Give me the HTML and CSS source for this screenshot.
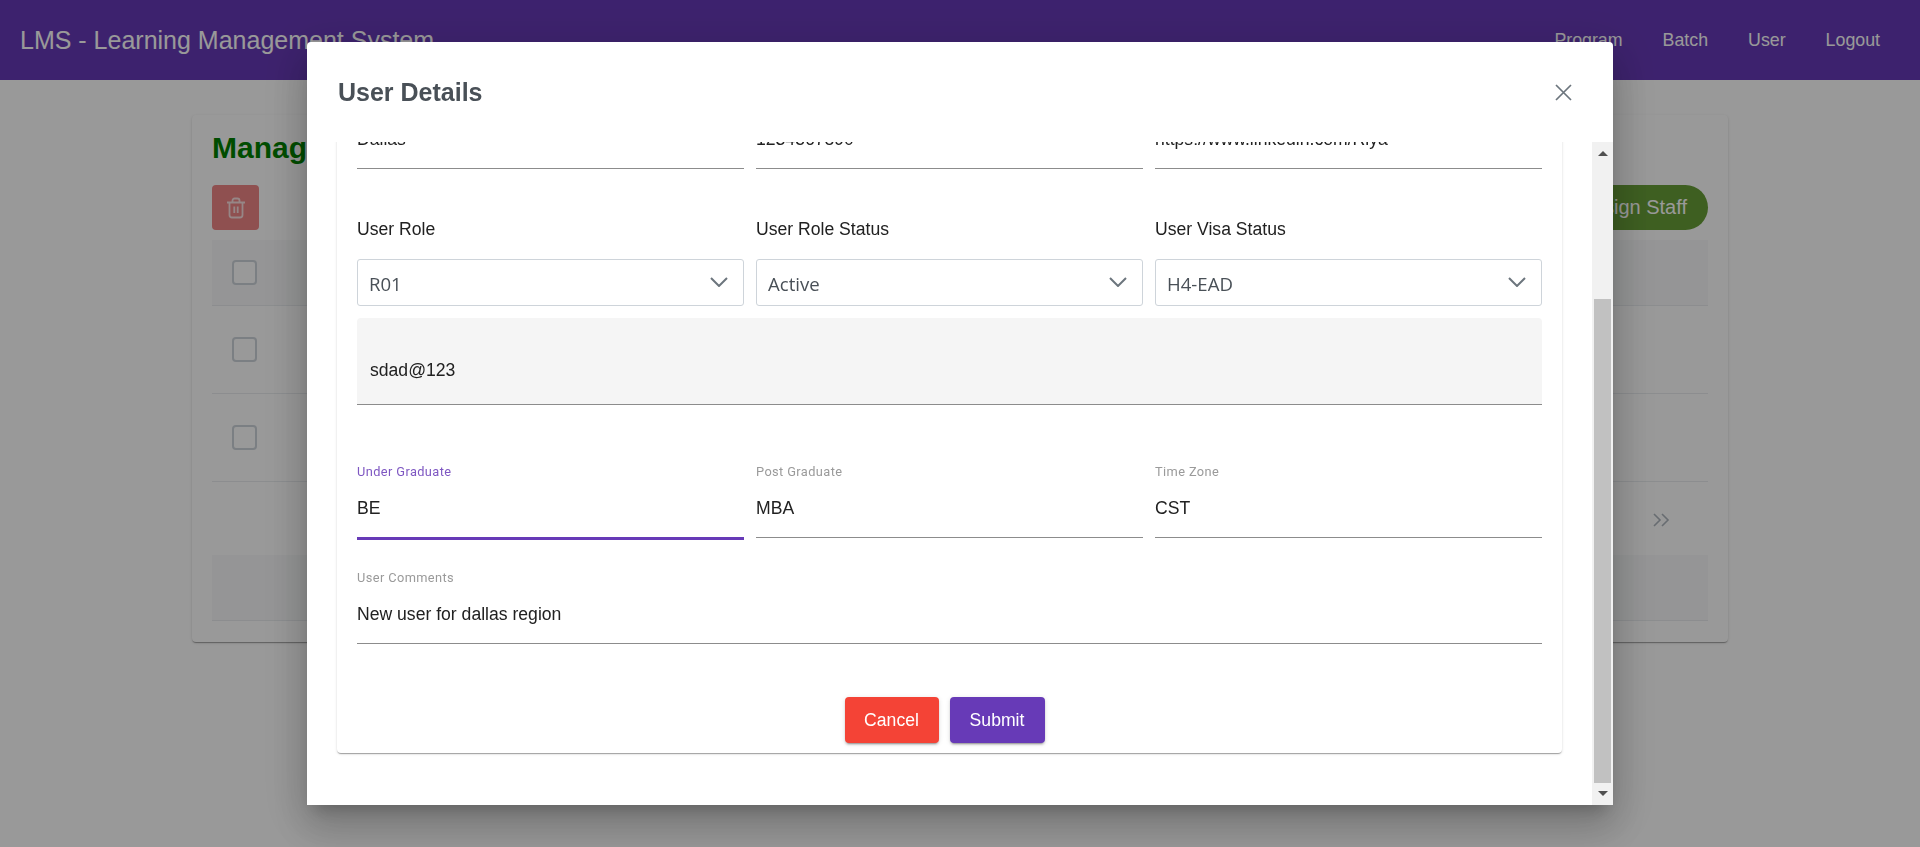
FILE: index.html
```html
<!DOCTYPE html>
<html lang="en">
<head>
<meta charset="utf-8">
<title>LMS - User Details</title>
<link rel="stylesheet" href="styles.css">
</head>
<body>
<header class="navbar">
  <span class="brand">LMS - Learning Management System</span>
  <nav class="nav-links">
    <a>Program</a><a>Batch</a><a>User</a><a>Logout</a>
  </nav>
</header>

<main class="page">
  <section class="panel">
    <h1 class="panel-title">Manage User</h1>
    <div class="toolbar">
      <button class="trash-btn" aria-label="Delete">
        <svg width="20" height="22" viewBox="0 0 20 22" fill="none" stroke="currentColor" stroke-width="1.8"><path d="M1 5.500h18M6.500 5.500V3.500a2 2 0 0 1 2-2h3a2 2 0 0 1 2 2v2M3.500 5.500v12.500a2.500 2.500 0 0 0 2.500 2.500h8a2.500 2.500 0 0 0 2.500-2.500V5.500M8.300 9.500v6.500M11.700 9.500v6.500"/></svg>
      </button>
      <button class="assign-btn">Assign Staff</button>
    </div>
    <div class="row row-head"><span class="check"></span></div>
    <div class="row"><span class="check"></span></div>
    <div class="row"><span class="check"></span></div>
    <div class="pager">
      <svg width="17" height="14" viewBox="0 0 17 14" fill="none" stroke="currentColor" stroke-width="1.600"><path d="M1 1l6 6-6 6M9 1l6 6-6 6"/></svg>
    </div>
    <div class="row-foot"></div>
  </section>
</main>

<div class="backdrop"></div>

<div class="dialog" role="dialog" aria-label="User Details">
  <div class="dialog-head">
    <h2 class="dialog-title">User Details</h2>
    <svg class="close-icon" width="17" height="17" viewBox="0 0 17 17" fill="none" stroke="currentColor" stroke-width="1.700"><path d="M1 1l15 15M16 1L1 16"/></svg>
  </div>
  <div class="dialog-body">
    <div class="scroll-view">
      <form class="card">
        <div class="grid">
          <div class="plain">Dallas</div>
          <div class="plain">1234567890</div>
          <div class="plain">https://www.linkedin.com/Riya</div>
        </div>
        <div class="grid select-labels">
          <label class="big-label">User Role</label>
          <label class="big-label">User Role Status</label>
          <label class="big-label">User Visa Status</label>
        </div>
        <div class="grid select-row">
          <div class="select"><span>R01</span><svg width="18" height="10" viewBox="0 0 18 10" fill="none" stroke="currentColor" stroke-width="2"><path d="M1 1l8 8 8-8"/></svg></div>
          <div class="select"><span>Active</span><svg width="18" height="10" viewBox="0 0 18 10" fill="none" stroke="currentColor" stroke-width="2"><path d="M1 1l8 8 8-8"/></svg></div>
          <div class="select"><span>H4-EAD</span><svg width="18" height="10" viewBox="0 0 18 10" fill="none" stroke="currentColor" stroke-width="2"><path d="M1 1l8 8 8-8"/></svg></div>
        </div>
        <div class="filled">sdad@123</div>
        <div class="grid float-row">
          <div class="float focused"><label>Under Graduate</label><div class="value">BE</div></div>
          <div class="float"><label>Post Graduate</label><div class="value">MBA</div></div>
          <div class="float"><label>Time Zone</label><div class="value">CST</div></div>
        </div>
        <div class="float comments"><label>User Comments</label><div class="value">New user for dallas region</div></div>
        <div class="actions">
          <button type="button" class="btn btn-cancel">Cancel</button>
          <button type="button" class="btn btn-submit">Submit</button>
        </div>
      </form>
    </div>
    <div class="scrollbar">
      <span class="arrow-up"></span>
      <div class="thumb"></div>
      <span class="arrow-down"></span>
    </div>
  </div>
</div>
</body>
</html>
```

FILE: styles.css
```css
* { box-sizing: border-box; }
html, body { height: 100%; }
body {
  margin: 0;
  overflow: hidden;
  background: #fff;
  color: #212121;
  font-family: "Liberation Sans", Arial, sans-serif;
  font-size: 17.6px;
}

/* Page behind the dialog */
.navbar {
  height: 80px;
  background: #673ab7;
  color: #fff;
  display: flex;
  align-items: center;
  justify-content: space-between;
  padding: 0 40px 0 20px;
}
.brand { font-size: 25px; }
.nav-links { display: flex; gap: 40px; font-size: 17.8px; }

.page { padding: 35px 192px 0; }
.panel {
  height: 527px;
  padding: 15px 20px 20px;
  background: #fff;
  border-radius: 4px;
  box-shadow: 0 2px 1px -1px rgba(0,0,0,.2), 0 1px 1px rgba(0,0,0,.14), 0 1px 3px rgba(0,0,0,.12);
}
.panel-title {
  margin: 0;
  height: 55px;
  font-size: 30px;
  line-height: 36px;
  color: #008000;
}
.toolbar { display: flex; justify-content: space-between; height: 45px; margin-bottom: 10px; }
.trash-btn {
  width: 47px;
  border: 0;
  border-radius: 4px;
  background: #ee8585;
  color: rgba(255,255,255,.75);
  display: flex;
  align-items: center;
  justify-content: center;
}
.assign-btn {
  padding: 0 21px;
  border: 0;
  border-radius: 32px;
  background: #689f38;
  color: #fff;
  font: 20px "Liberation Sans", Arial, sans-serif;
}
.row {
  height: 88px;
  padding: 31px 20px 0;
  border-bottom: 1px solid #e9ecef;
}
.row-head { height: 66px; padding-top: 20px; background: #f8f9fa; }
.check {
  display: block;
  width: 25px;
  height: 25px;
  border: 2px solid #ced4da;
  border-radius: 4px;
  background: #fff;
}
.pager {
  height: 73px;
  display: flex;
  align-items: center;
  justify-content: flex-end;
  padding: 3px 38px 0 0;
  color: #adb5bd;
}
.row-foot { height: 66px; background: #f8f9fa; border-bottom: 1px solid #e9ecef; }

.backdrop { position: fixed; inset: 0; background: rgba(0,0,0,.4); }

/* Dialog */
.dialog {
  position: fixed;
  left: 307px;
  top: 42px;
  width: 1306px;
  height: 763px;
  display: flex;
  flex-direction: column;
  background: #fff;
  border-radius: 4px 4px 0 0;
  box-shadow: 0 11px 15px -7px rgba(0,0,0,.2), 0 24px 38px 3px rgba(0,0,0,.14), 0 9px 46px 8px rgba(0,0,0,.12);
}
.dialog-head {
  height: 100px;
  flex: none;
  display: flex;
  align-items: center;
  justify-content: space-between;
  padding: 0 41px 0 31px;
}
.dialog-title { margin: 0; font-size: 25px; font-weight: 700; color: #495057; }
.close-icon { color: #6c757d; }
.dialog-body { flex: 1; min-height: 0; display: flex; }
.scroll-view { flex: 1; min-width: 0; overflow: hidden; padding: 0 30px; }
.scrollbar {
  width: 21px;
  flex: none;
  background: #f1f1f1;
  display: flex;
  flex-direction: column;
  align-items: center;
}
.arrow-up, .arrow-down { width: 0; height: 0; border-left: 5px solid transparent; border-right: 5px solid transparent; flex: none; }
.arrow-up { border-bottom: 5px solid #505050; margin: 9px 0 143px; }
.arrow-down { border-top: 5px solid #505050; margin: 8px 0 0; }
.thumb { width: 17px; height: 484px; background: #c1c1c1; flex: none; }

.card {
  margin-top: -40px;
  height: 651px;
  padding: 28px 20px 0;
  background: #fff;
  border-radius: 4px;
  box-shadow: 0 2px 1px -1px rgba(0,0,0,.2), 0 1px 1px rgba(0,0,0,.14), 0 1px 3px rgba(0,0,0,.12);
}
.grid { display: grid; grid-template-columns: repeat(3, 387px); column-gap: 12px; }
.plain {
  height: 39px;
  line-height: 19px;
  border-bottom: 1px solid #8c8c8c;
  color: #212121;
}
.select-labels { margin-top: 50px; }
.big-label { line-height: 20px; color: #212121; }
.select-row { margin-top: 20px; }
.select {
  height: 47px;
  border: 1px solid #ced4da;
  border-radius: 3px;
  display: flex;
  align-items: center;
  justify-content: space-between;
  padding: 0 15px 0 11px;
  color: #495057;
  font-family: "Open Sans", "Noto Sans", sans-serif;
  font-size: 18.6px;
}
.select span { position: relative; top: 1px; }
.select svg { color: #6c757d; margin-bottom: 1px; }
.filled {
  margin-top: 12px;
  height: 87px;
  padding: 43px 13px 0;
  line-height: 19px;
  background: #f5f5f5;
  border-radius: 4px 4px 0 0;
  border-bottom: 1px solid #8c8c8c;
}
.float-row { margin-top: 60px; }
.float label {
  display: block;
  height: 14px;
  line-height: 14px;
  font-family: Roboto, sans-serif;
  font-size: 12.8px;
  letter-spacing: .4px;
  color: #9a9a9a;
}
.float .value {
  height: 59px;
  padding-top: 19px;
  line-height: 20px;
  border-bottom: 1px solid #8c8c8c;
}
.float.focused label { color: #7e57c2; }
.float.focused .value { height: 61px; border-bottom: 3px solid #673ab7; }
.comments { margin-top: 31px; }
.actions { display: flex; justify-content: center; gap: 11px; margin-top: 53px; padding-right: 10px; }
.btn {
  height: 46px;
  border: 0;
  border-radius: 4px;
  color: #fff;
  font: 17.6px "Liberation Sans", Arial, sans-serif;
  box-shadow: 0 3px 1px -2px rgba(0,0,0,.2), 0 2px 2px rgba(0,0,0,.14), 0 1px 5px rgba(0,0,0,.12);
}
.btn-cancel { width: 94px; background: #f44336; }
.btn-submit { width: 95px; background: #673ab7; }
```
